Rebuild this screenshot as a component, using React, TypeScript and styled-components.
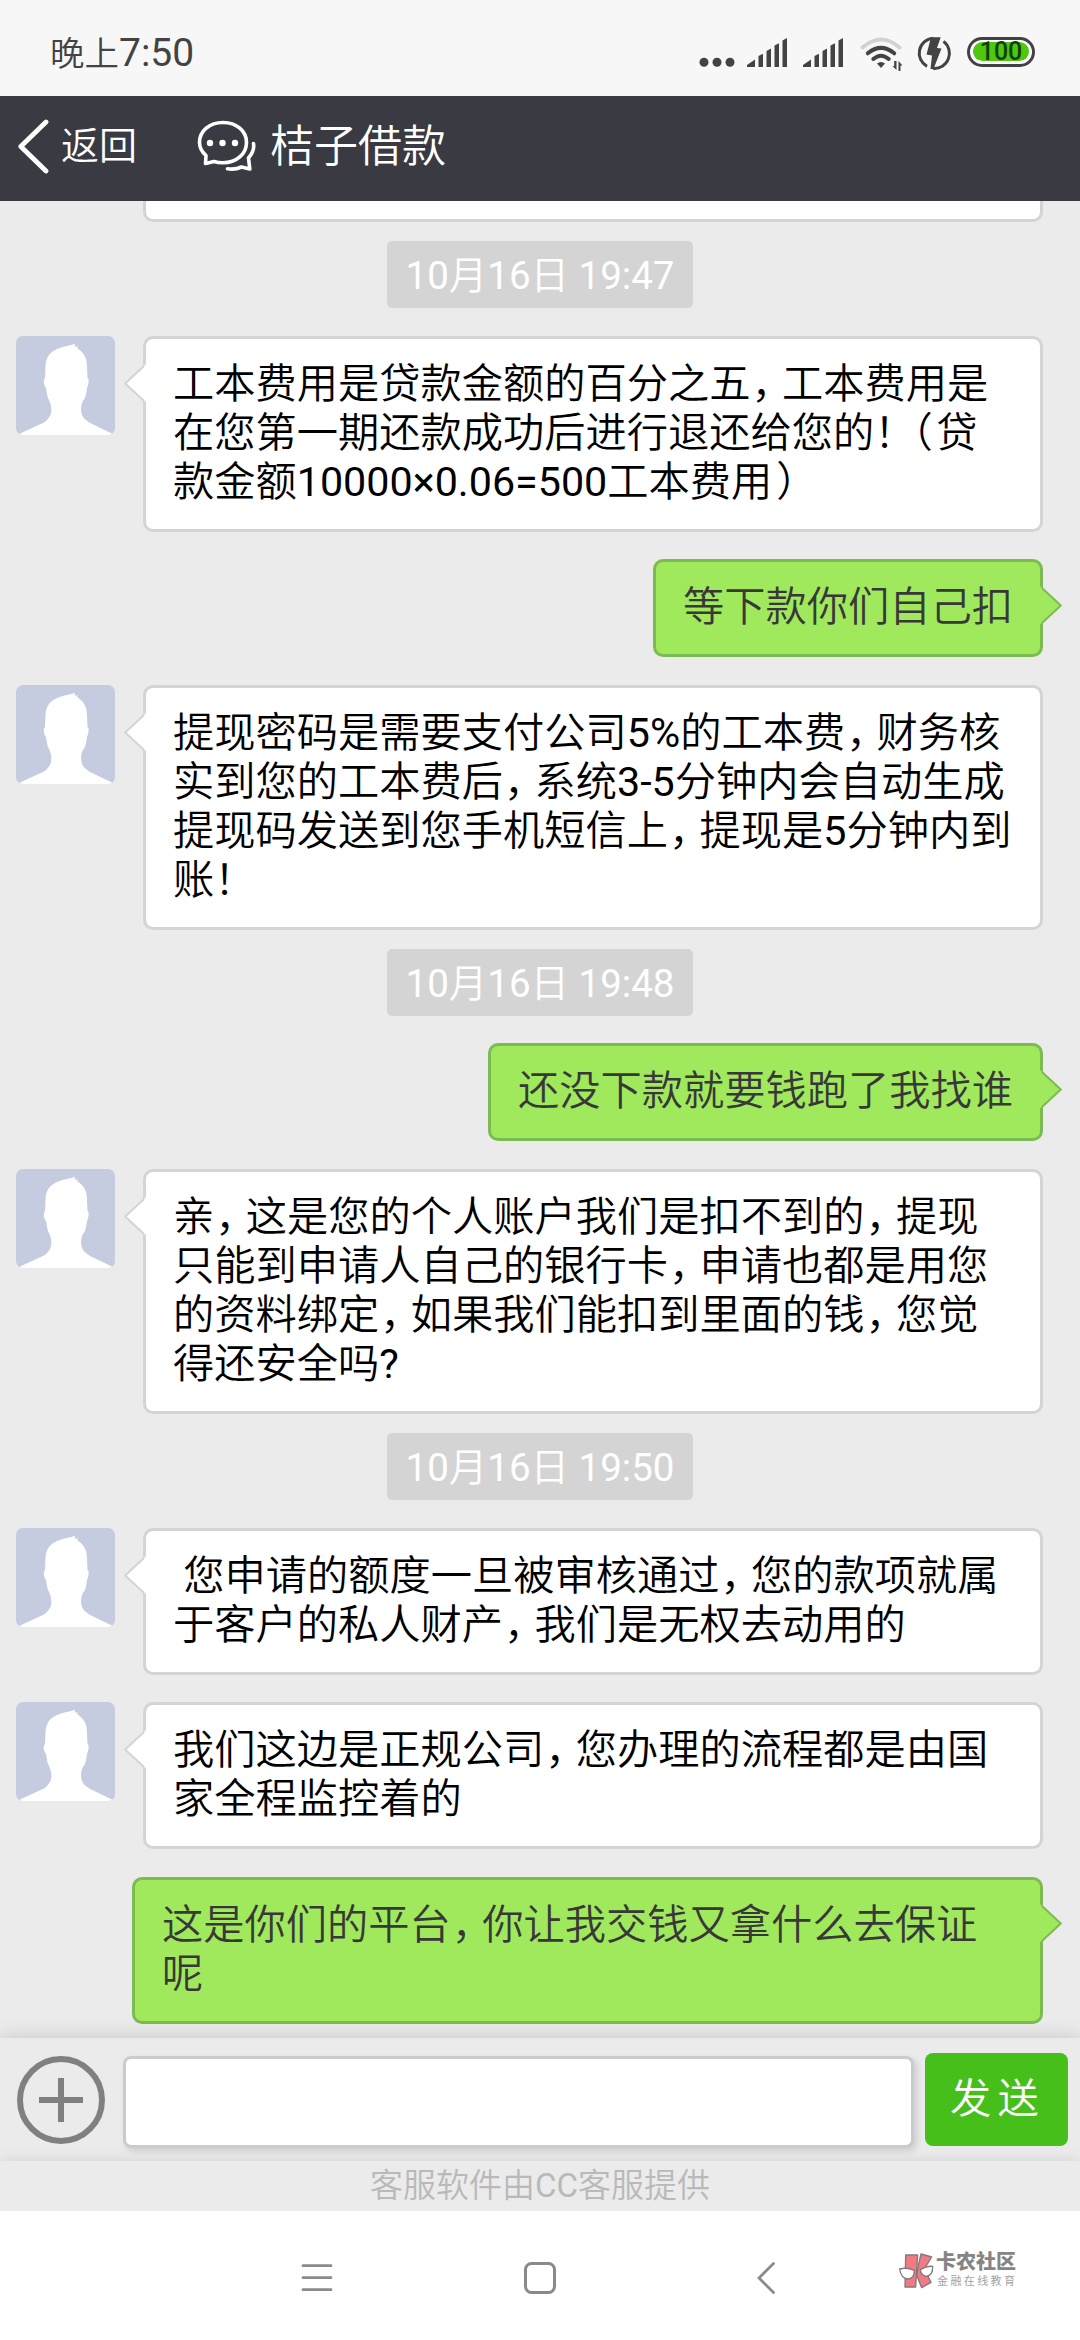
import React from "react";
import styled, { createGlobalStyle, css } from "styled-components";

const fontStack =
  'Roboto, "Noto Sans CJK SC DemiLight", "Noto Sans CJK SC", sans-serif';

const GlobalStyle = createGlobalStyle`
  *, *::before, *::after { box-sizing: border-box; }
  html, body { margin: 0; padding: 0; }
  body { background: #fff; }
  svg { display: block; flex: none; }
`;

const Screen = styled.div`
  display: flex;
  flex-direction: column;
  width: 1080px;
  height: 2340px;
  overflow: hidden;
  background: #ebebeb;
  font-family: ${fontStack};
  font-size: 41.25px;
  color: #000;
`;

/* ---------- status bar ---------- */

const StatusBar = styled.header`
  display: flex;
  align-items: center;
  justify-content: space-between;
  flex: none;
  height: 96px;
  padding: 8px 45px 0 50px;
  background: #f7f7f7;
  color: #434343;
`;

const Clock = styled.div`
  display: flex;
  align-items: baseline;
  padding-top: 2px;
  font-size: 34.5px;
  line-height: 50px;
`;

const ClockDigits = styled.span`
  font-size: 39px;
`;

const StatusIcons = styled.div`
  display: flex;
  align-items: center;
  height: 40px;
  margin-bottom: 1px;
`;

const Signal = styled.svg`
  margin-left: 12px;
  & + & {
    margin-left: 15px;
  }
`;

const WifiIcon = styled.svg`
  margin-left: 16px;
`;

const ChargeIcon = styled.svg`
  margin-left: 12px;
`;

const Battery = styled.div`
  display: flex;
  width: 68px;
  height: 30px;
  margin-left: 15px;
  padding: 2.5px 3px;
  border: 3px solid #434046;
  border-radius: 15px;
  background: #fff;
`;

const BatteryLevel = styled.div`
  flex: 1;
  border-radius: 10px;
  background: #4dc70f;
  color: #123f0a;
  font-size: 25px;
  font-weight: 500;
  line-height: 20px;
  text-align: center;
`;

/* ---------- title bar ---------- */

const TitleBar = styled.nav`
  display: flex;
  align-items: center;
  flex: none;
  height: 105px;
  padding-left: 16px;
  background: #393a42;
  color: #fff;
`;

const BackLabel = styled.span`
  margin: -5px 0 0 10px;
  font-size: 38px;
  line-height: 48px;
`;

const ChatIcon = styled.svg`
  margin: -8px 0 0 54px;
`;

const Title = styled.h1`
  margin: -3px 0 0 3px;
  font-size: 44px;
  font-weight: 400;
  line-height: 52px;
`;

/* ---------- conversation ---------- */

const Conversation = styled.main`
  flex: 1;
  min-height: 0;
  overflow: hidden;
  display: flex;
  flex-direction: column;
`;

const BubbleTail = styled.div`
  flex: none;
  width: 900px;
  height: 21px;
  margin-left: 143px;
  border: 3px solid #d4d4d4;
  border-top: 0;
  border-radius: 0 0 10px 10px;
  background: #fff;
`;

const TimeChip = styled.time`
  flex: none;
  align-self: center;
  height: 67px;
  margin-top: 19px;
  padding: 0 19px;
  border-radius: 5px;
  background: #d4d4d4;
  color: #fff;
  font-size: 38.5px;
  line-height: 69px;
`;

const Row = styled.div<{ $mine?: boolean }>`
  display: flex;
  flex: none;
  align-items: flex-start;
  justify-content: ${(p) => (p.$mine ? "flex-end" : "flex-start")};
  margin-top: 27.5px;
  padding: 0 37px 0 16px;
`;

const Avatar = styled.svg`
  border-radius: 7px;
  margin-right: 28px;
  background: #c5cce0;
`;

const Bubble = styled.div<{ $mine?: boolean; $wide?: boolean }>`
  position: relative;
  padding: 21px 27px 21.9px;
  border: 3px solid #d4d4d4;
  border-radius: 10px;
  background: #fff;
  line-height: 49.1px;
  white-space: pre;
  ${(p) =>
    p.$mine
      ? css`
          width: ${p.$wide ? "911px" : "auto"};
          border-color: #7cbb52;
          background: #a0e95d;
          color: #383838;
        `
      : css`
          flex: 1;
        `}
`;

const Arrow = styled.svg<{ $mine?: boolean }>`
  position: absolute;
  top: ${(p) => (p.$mine ? 21 : 22)}px;
  ${(p) => (p.$mine ? "right: -22px; transform: scaleX(-1);" : "left: -22px;")}
`;

const Mark = styled.span<{ $before: number; $after: number }>`
  margin-left: ${(p) => p.$before}px;
  letter-spacing: ${(p) => p.$after}px;
`;

const Line = styled.div`
  height: 49.1px;
`;

/* ---------- composer ---------- */

const Composer = styled.section`
  position: relative;
  display: flex;
  flex: none;
  align-items: flex-start;
  height: 123px;
  padding: 15px 12px 0 17px;
  background: #ebebeb;
  box-shadow: 0 0 18px rgba(0, 0, 0, 0.17);
`;

const PlusIcon = styled.svg`
  margin-top: 3px;
`;

const MessageInput = styled.input`
  width: 791px;
  height: 92px;
  margin: 3px 11px 0 18px;
  border: 3px solid #cbcbcb;
  border-radius: 8px;
  outline: 0;
  background: #fff;
  font: inherit;
  box-shadow: 3px 3px 6px rgba(0, 0, 0, 0.13);
`;

const SendButton = styled.button`
  flex: 1;
  height: 93px;
  padding: 0 0 9px 2px;
  border: 0;
  border-radius: 8px;
  background: #46bf1b;
  color: #fff;
  font: inherit;
  letter-spacing: 6.2px;
`;

const Credit = styled.footer`
  position: relative;
  flex: none;
  height: 50px;
  background: #ebebeb;
  color: #b9b9b9;
  font-size: 33px;
  line-height: 50px;
  text-align: center;
  box-shadow: 0 0 14px rgba(0, 0, 0, 0.1);
`;

/* ---------- system navigation ---------- */

const SystemNav = styled.nav`
  position: relative;
  display: flex;
  flex: none;
  align-items: flex-start;
  height: 129px;
  padding: 40px 0 0 298px;
  background: #fff;
`;

const HomeIcon = styled.svg`
  margin-left: 182px;
`;

const BackIcon = styled.svg`
  margin-left: 187px;
`;

const Brand = styled.div`
  display: flex;
  margin: -2px 0 0 112px;
`;

const BrandText = styled.div`
  display: flex;
  flex-direction: column;
  margin-left: -3px;
  white-space: nowrap;
`;

const BrandName = styled.strong`
  font-family: "Noto Sans CJK SC", sans-serif;
  font-size: 20px;
  font-weight: 900;
  line-height: 24px;
  color: #858585;
`;

const BrandNote = styled.span`
  margin-left: 1px;
  font-family: "Noto Sans CJK SC", sans-serif;
  font-size: 11px;
  line-height: 14px;
  letter-spacing: 2.4px;
  color: #a3a3a3;
`;

/* Full-width punctuation is set tighter than a full em. */
const MARKS: Record<string, [number, number]> = {
  "，": [1, -10.8],
  "！": [0, -10.3],
  "（": [-13.8, 3.5],
  "）": [4, -4],
};

function renderLine(line: string) {
  return line.split(/([，！（）])/).map((part, i) => {
    const mark = MARKS[part];
    return mark ? (
      <Mark key={i} $before={mark[0]} $after={mark[1]}>
        {part}
      </Mark>
    ) : (
      part
    );
  });
}

function Message({ lines, mine }: { lines: string[]; mine?: boolean }) {
  return (
    <Row $mine={mine}>
      {!mine && (
        <Avatar width="99" height="99" viewBox="0 0 99 99">
          <path
            fill="#fff"
            d="M59 7.700L58.500 10.500L62 10.500C60.500 11.500 61 12 63 13.500C69 18 71 23 71 31L71.500 42C73.500 43 72.500 49 71 52C70 59 69.500 62 67 65C64.500 69 64.500 76 66.500 80C68 83 70 84 74 87L96 97.500V99H4V97.500L28 86.500C31 85 32.500 82 34.500 79C36 75 35.500 70 33.500 65C31 61 31 57 30 52C27.500 49 27 44 29 42L29.500 30C30 21 34 16 41 13C46 10.500 53 10 59 7.700Z"
          />
        </Avatar>
      )}
      <Bubble $mine={mine} $wide={lines.length > 1}>
        <Arrow $mine={mine} width="22" height="44" viewBox="0 0 22 44">
          <path
            fill={mine ? "#a0e95d" : "#fff"}
            d="M22 3L19.500 5.500L1 22.500L19.500 39.500L22 41Z"
          />
          <path
            fill="none"
            stroke={mine ? "#7cbb52" : "#d4d4d4"}
            strokeWidth="2"
            d="M20 5L1.200 22.500L20 40"
          />
        </Arrow>
        {lines.map((line) => (
          <Line key={line}>{renderLine(line)}</Line>
        ))}
      </Bubble>
    </Row>
  );
}

function SignalBars() {
  return (
    <Signal width="41" height="40" viewBox="0 0 41 40" fill="#434343">
      <path d="M0 35L0 33L8 27.500V35ZM11.500 24L16 21.800V35H11.500ZM19.500 19L24 16.600V35H19.500ZM27.500 13.500L32 11.300V35H27.500ZM35.500 8.500L40 6V35H35.500Z" />
    </Signal>
  );
}

export default function App() {
  return (
    <Screen>
      <GlobalStyle />
      <StatusBar>
        <Clock>
          晚上<ClockDigits>7:50</ClockDigits>
        </Clock>
        <StatusIcons>
          <svg width="36" height="40" viewBox="0 0 36 40" fill="#434343">
            <circle cx="5" cy="30.300" r="4.500" />
            <circle cx="18" cy="30.300" r="4.500" />
            <circle cx="31" cy="30.300" r="4.500" />
          </svg>
          <SignalBars />
          <SignalBars />
          <WifiIcon width="44" height="40" viewBox="0 0 44 40" fill="none" strokeWidth="4" strokeLinecap="round">
            <path stroke="#d2d2d2" d="M2.500 15.500Q21 -0.500 39.500 15.500" />
            <path stroke="#434343" d="M7.800 21.300Q21 10.500 34.200 21.300" />
            <path stroke="#434343" d="M13.300 27Q21 20.500 28.700 27" />
            <path fill="#434343" d="M17 31.500Q21 28.500 25 31.500L21 36Z" />
            <path fill="#434343" d="M36.500 29V38L32.500 34H34.200V29ZM38.500 39V29L42.500 33.500H40.500V39Z" />
          </WifiIcon>
          <ChargeIcon width="36" height="40" viewBox="0 -4 36 40">
            <path fill="none" stroke="#434343" strokeWidth="3" d="M17 2.300A15 15 0 0 0 11 30.400M27.500 5.400A15 15 0 0 1 17 32.300" />
            <path fill="#434343" d="M15 1.300L24.700 1.300L21 12L25.500 12.500L17.500 33L14.500 33L16 19.500L10.500 18.500Z" />
          </ChargeIcon>
          <Battery>
            <BatteryLevel>100</BatteryLevel>
          </Battery>
        </StatusIcons>
      </StatusBar>

      <TitleBar>
        <svg width="35" height="60" viewBox="0 0 35 60">
          <path fill="none" stroke="#fff" strokeWidth="4.800" strokeLinecap="round" strokeLinejoin="round" d="M30 3L4.800 27.500L30 52" />
        </svg>
        <BackLabel>返回</BackLabel>
        <ChatIcon width="76" height="66" viewBox="0 0 76 66">
          <g fill="none" stroke="#fff" strokeWidth="3.600" strokeLinecap="round" strokeLinejoin="round">
            <path d="M32 10.500C45.500 10.500 55.500 19 55.500 30.500S45.500 50.800 32 50.800C28.500 50.800 26 50.500 23 49.500L14.500 51.500L15 43.500C10.500 39.500 8.500 35.500 8.500 30.500C8.500 19 18.500 10.500 32 10.500Z" />
            <path d="M62.500 31.500C63.500 37 61 42 57.500 46L58.800 57L50.500 55C45 57.500 41 57.500 36.500 56.800" />
          </g>
          <g fill="#fff">
            <circle cx="19" cy="31" r="3.200" />
            <circle cx="31.500" cy="31" r="3.200" />
            <circle cx="44" cy="31" r="3.200" />
          </g>
        </ChatIcon>
        <Title>桔子借款</Title>
      </TitleBar>

      <Conversation>
        <BubbleTail />
        <TimeChip>10月16日 19:47</TimeChip>
        <Message
          lines={[
            "工本费用是贷款金额的百分之五，工本费用是",
            "在您第一期还款成功后进行退还给您的！（贷",
            "款金额10000×0.06=500工本费用）",
          ]}
        />
        <Message mine lines={["等下款你们自己扣"]} />
        <Message
          lines={[
            "提现密码是需要支付公司5%的工本费，财务核",
            "实到您的工本费后，系统3-5分钟内会自动生成",
            "提现码发送到您手机短信上，提现是5分钟内到",
            "账！",
          ]}
        />
        <TimeChip>10月16日 19:48</TimeChip>
        <Message mine lines={["还没下款就要钱跑了我找谁"]} />
        <Message
          lines={[
            "亲，这是您的个人账户我们是扣不到的，提现",
            "只能到申请人自己的银行卡，申请也都是用您",
            "的资料绑定，如果我们能扣到里面的钱，您觉",
            "得还安全吗?",
          ]}
        />
        <TimeChip>10月16日 19:50</TimeChip>
        <Message
          lines={[
            " 您申请的额度一旦被审核通过，您的款项就属",
            "于客户的私人财产，我们是无权去动用的",
          ]}
        />
        <Message
          lines={["我们这边是正规公司，您办理的流程都是由国", "家全程监控着的"]}
        />
        <Message
          mine
          lines={["这是你们的平台，你让我交钱又拿什么去保证", "呢"]}
        />
      </Conversation>

      <Composer>
        <PlusIcon width="88" height="88" viewBox="0 0 88 88">
          <g fill="none" stroke="#808080" strokeWidth="6">
            <circle cx="44" cy="44" r="41" />
            <path d="M22 44H66M44 22V66" />
          </g>
        </PlusIcon>
        <MessageInput />
        <SendButton>发送</SendButton>
      </Composer>
      <Credit>客服软件由CC客服提供</Credit>

      <SystemNav>
        <svg width="38" height="54" viewBox="0 0 38 54">
          <path stroke="#8a8a8a" strokeWidth="2.800" strokeLinecap="round" d="M5 14.700H33M5 26.700H33M5 38.700H33" />
        </svg>
        <HomeIcon width="44" height="54" viewBox="0 0 44 54">
          <rect x="7.500" y="12.500" width="29" height="29" rx="6" fill="none" stroke="#8a8a8a" strokeWidth="3" />
        </HomeIcon>
        <BackIcon width="34" height="54" viewBox="0 0 34 54">
          <path fill="none" stroke="#8a8a8a" strokeWidth="2.800" strokeLinecap="round" d="M24.500 12.500L10 27L24.500 41.500" />
        </BackIcon>
        <Brand>
          <svg width="44" height="44" viewBox="0 0 132 132">
            <g fill="#f27a84" stroke="#85787a" strokeWidth="4" strokeLinejoin="round">
              <path d="M32 18H68L65 62L62 114H30Z" />
              <path d="M78 15L110 24L88 60L108 100L80 116L66 80L68 58Z" />
            </g>
            <g fill="#fff" stroke="#85787a" strokeWidth="4">
              <path d="M14 60Q36 54 58 64Q58 90 38 90Q18 88 14 60Z" />
              <path d="M76 62Q96 50 113 52Q114 80 94 82Q78 80 76 62Z" />
            </g>
          </svg>
          <BrandText>
            <BrandName>卡农社区</BrandName>
            <BrandNote>金融在线教育</BrandNote>
          </BrandText>
        </Brand>
      </SystemNav>
    </Screen>
  );
}
